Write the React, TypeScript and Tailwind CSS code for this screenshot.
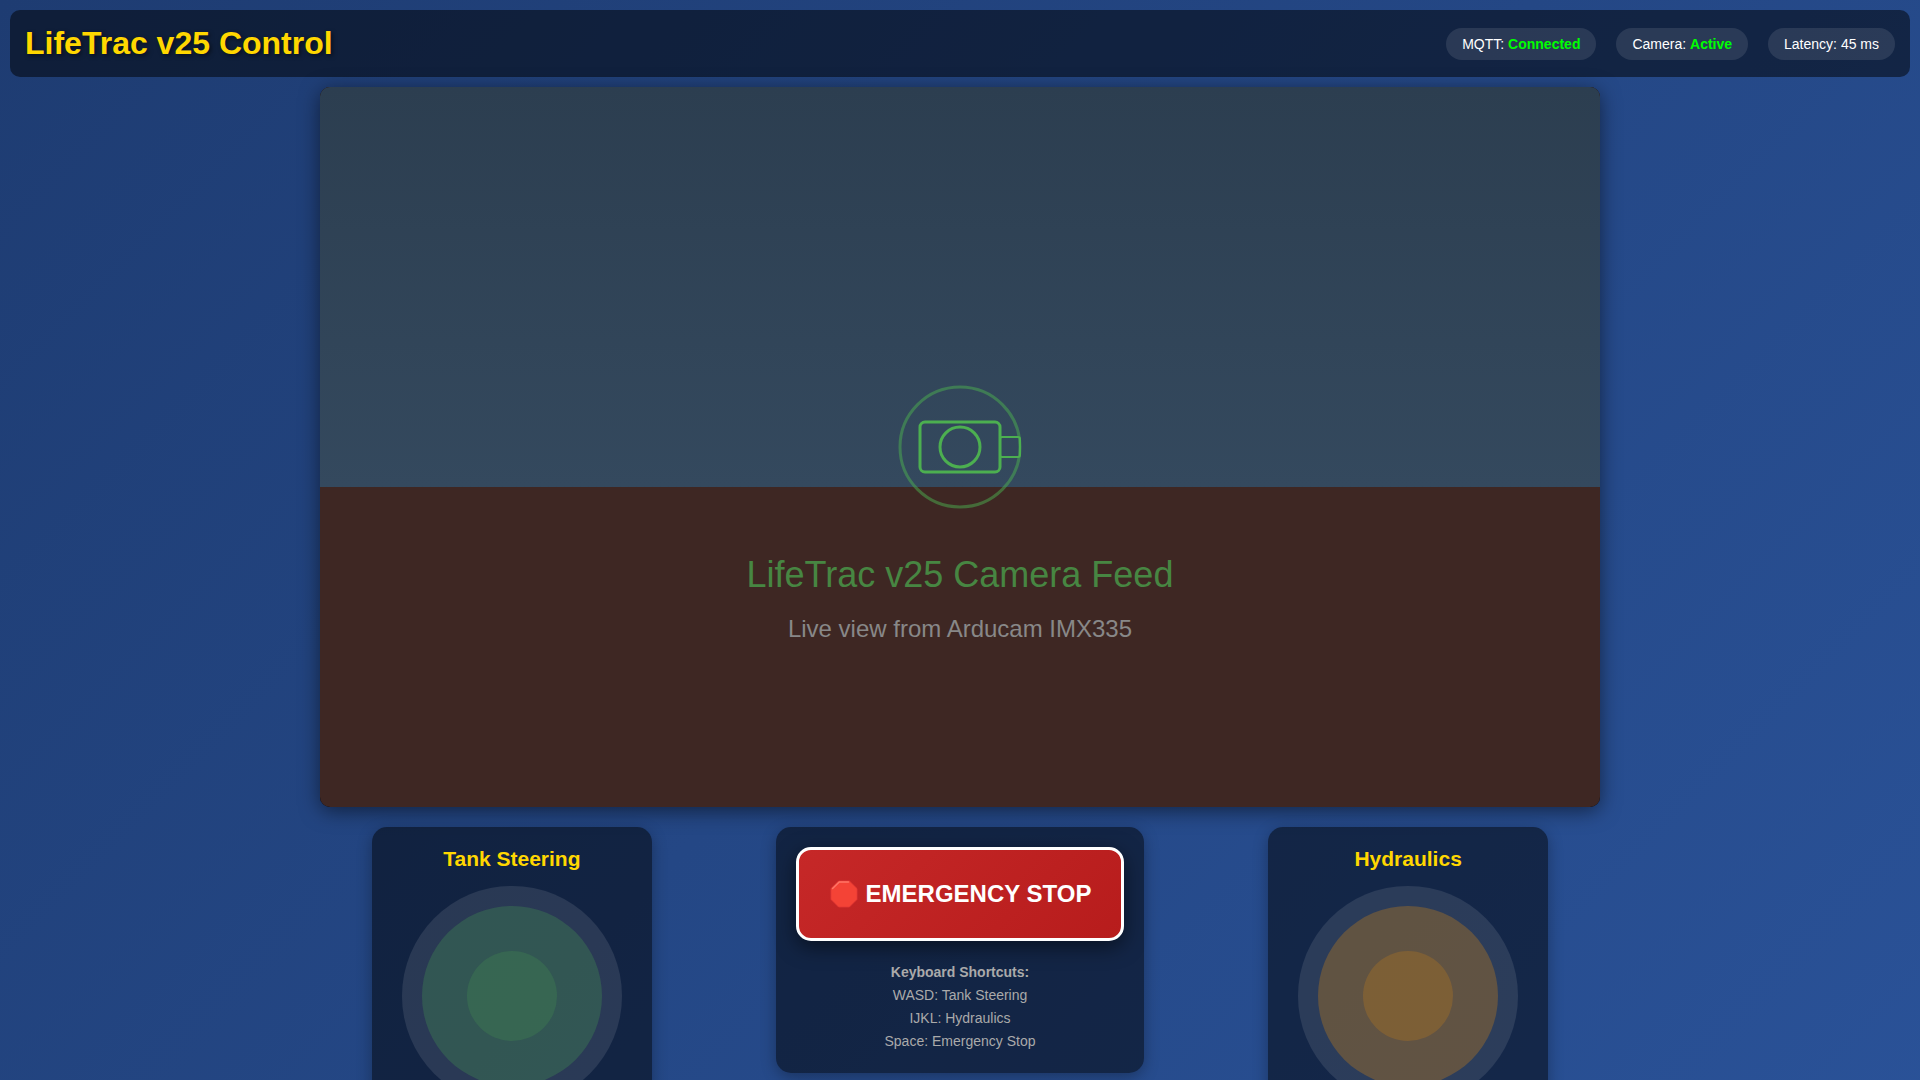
import React from "react";

function StatusPill({ label, children }: { label: string; children: React.ReactNode }) {
  return (
    <li className="rounded-[20px] bg-white/10 px-4 py-2 text-[14px] leading-4 whitespace-nowrap">
      {label}: {children}
    </li>
  );
}

function CameraIcon() {
  return (
    <svg width="126" height="126" viewBox="0 0 126 126" fill="none" stroke="#4caf50" aria-hidden="true">
      <circle cx="63" cy="63" r="60" strokeWidth="3" opacity="0.5" />
      <rect x="23" y="38" width="80" height="50" rx="5" strokeWidth="3" />
      <circle cx="63" cy="63" r="20" strokeWidth="3" />
      <rect x="103" y="53" width="20" height="20" rx="2" strokeWidth="2" />
    </svg>
  );
}

function StopSign() {
  return (
    <svg width="30" height="28" viewBox="0 0 30 28" aria-hidden="true">
      <path
        d="M9.6 1h10.8L28 8.6v10.8L20.4 27H9.6L2 19.4V8.6z"
        fill="#f44336"
        stroke="#e53935"
        strokeWidth="0.8"
        strokeLinejoin="round"
      />
      <path d="M3.6 8.5 10.2 2h9.3" fill="none" stroke="#ff7566" strokeWidth="1.6" strokeLinecap="round" strokeLinejoin="round" />
    </svg>
  );
}

function Joystick({ title, color }: { title: string; color: "green" | "orange" }) {
  const back = color === "green" ? "bg-[#4caf50]/25" : "bg-[#ff9800]/25";
  const front = color === "green" ? "bg-[#4caf50]/18" : "bg-[#ff9800]/18";
  return (
    <section className="flex flex-col items-center gap-[15px] rounded-[15px] bg-black/50 px-[30px] pt-5 pb-8 shadow-[0_4px_15px_rgba(0,0,0,0.3)]">
      <h2 className="text-[21px] leading-6 font-bold text-[#ffd700]">{title}</h2>
      <div className="grid size-[220px] place-items-center rounded-full bg-white/10">
        <div className={`grid size-[180px] place-items-center rounded-full ${back}`}>
          <div className={`size-[90px] rounded-full ${front}`} />
        </div>
      </div>
    </section>
  );
}

export default function App() {
  return (
    <div className="min-h-screen bg-[linear-gradient(135deg,#1e3c72_0%,#2a5298_100%)] p-[10px] font-['Liberation_Sans',Arial,sans-serif] text-white">
      <header className="flex items-center justify-between rounded-[10px] bg-black/50 p-[15px]">
        <h1 className="text-[32px] leading-[37px] font-bold text-[#ffd700] [text-shadow:2px_2px_4px_rgba(0,0,0,0.5)]">
          LifeTrac v25 Control
        </h1>
        <ul className="flex gap-5">
          <StatusPill label="MQTT">
            <strong className="text-[#00ff00]">Connected</strong>
          </StatusPill>
          <StatusPill label="Camera">
            <strong className="text-[#00ff00]">Active</strong>
          </StatusPill>
          <StatusPill label="Latency">45 ms</StatusPill>
        </ul>
      </header>

      <main className="mx-auto mt-[10px] max-w-7xl">
        <div className="overflow-hidden rounded-[10px] bg-black shadow-[0_4px_20px_rgba(0,0,0,0.5)]">
          <div className="grid aspect-video grid-rows-[1fr_auto_1fr] justify-items-center bg-[#3e2723] bg-[linear-gradient(#2c3e50,#34495e)] bg-[length:100%_55.56%] bg-no-repeat">
            <div />
            <CameraIcon />
            <div className="flex flex-col items-center gap-5 pt-[45px]">
              <p className="text-4xl leading-10 text-[#4caf50] opacity-70">LifeTrac v25 Camera Feed</p>
              <p className="text-2xl leading-7 text-[#888888]">Live view from Arducam IMX335</p>
            </div>
          </div>
        </div>

        <div className="mt-5 flex items-start justify-around gap-5">
          <Joystick title="Tank Steering" color="green" />
          <section className="rounded-[15px] bg-black/50 p-5 text-center shadow-[0_4px_15px_rgba(0,0,0,0.3)]">
            <button
              type="button"
              className="flex items-center gap-[7px] rounded-[15px] border-3 border-white bg-[linear-gradient(135deg,#c62828,#b71c1c)] bg-origin-border p-[30px] text-2xl leading-7 font-bold whitespace-nowrap shadow-[0_6px_20px_rgba(0,0,0,0.5)]"
            >
              <StopSign />
              EMERGENCY STOP
            </button>
            <div className="mt-5 text-[14px] leading-[23px] text-[#aaaaaa]">
              <p className="font-bold">Keyboard Shortcuts:</p>
              <p>WASD: Tank Steering</p>
              <p>IJKL: Hydraulics</p>
              <p>Space: Emergency Stop</p>
            </div>
          </section>
          <Joystick title="Hydraulics" color="orange" />
        </div>
      </main>
    </div>
  );
}
